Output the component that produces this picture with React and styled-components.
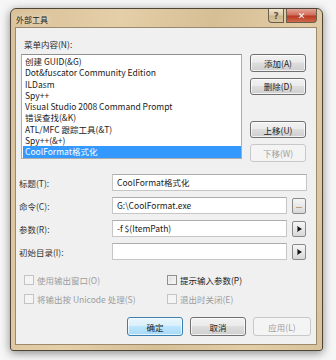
import React from 'react';
import styled, { createGlobalStyle } from 'styled-components';

const FS = '8.5px';

const Global = createGlobalStyle`
  html, body {
    margin: 0;
    padding: 0;
    background: #f6f6f6;
  }
  body {
    font-family: "Noto Sans CJK SC", "Noto Sans", sans-serif;
    font-size: ${FS};
    color: #2a2a2a;
  }
`;

const Page = styled.div`
  width: 336px;
  height: 360px;
  padding: 8px 0 0 10px;
  box-sizing: border-box;
`;

const Frame = styled.div`
  width: 313px;
  height: 343px;
  box-sizing: border-box;
  border: 1px solid #4d4638;
  border-radius: 6px 6px 3px 3px;
  background: linear-gradient(100deg, #d9c199 0%, #e5cfa8 30%, #d6be95 55%, #e3cda6 80%, #d8c29b 100%);
  box-shadow: 0 2px 10px rgba(0, 0, 0, 0.45);
  padding: 0 5px 5px 4px;
  display: flex;
  flex-direction: column;
`;

const TitleBar = styled.div`
  height: 18px;
  display: flex;
  align-items: flex-start;
  justify-content: space-between;
`;

const Title = styled.span`
  font-size: 8px;
  color: #1a1a1a;
  margin-top: 5px;
  margin-left: 1px;
  text-shadow: 0 0 6px rgba(255, 255, 255, 0.9);
`;

const Caption = styled.div`
  display: flex;
  gap: 2px;
`;

const CapButton = styled.div`
  width: ${({ wide }) => (wide ? 31 : 16)}px;
  height: 14px;
  box-sizing: border-box;
  border: 1px solid #6a5f4c;
  border-top: none;
  border-radius: ${({ wide }) => (wide ? '0 0 4px 0' : '0 0 0 4px')};
  background: ${({ wide }) =>
    wide
      ? 'linear-gradient(#e5a596 0%, #d0705d 45%, #b93a22 55%, #cf6a4c 100%)'
      : 'linear-gradient(#efe3cd 0%, #dcc9a8 45%, #cdb68e 55%, #d9c59f 100%)'};
  display: flex;
  align-items: center;
  justify-content: center;
  color: ${({ wide }) => (wide ? '#fff' : '#5b5346')};
  font-family: "DejaVu Sans", sans-serif;
  font-weight: bold;
  font-size: 9px;
`;

const Client = styled.div`
  flex: 1;
  background: #f0f0f0;
  border: 1px solid #9c8a6c;
  padding: 10px 8px 0 5px;
  display: flex;
  flex-direction: column;
`;

const GroupLabel = styled.div`
  line-height: 12px;
  margin-left: 3px;
  height: 16px;
`;

const TopRow = styled.div`
  display: flex;
  gap: 8px;
  height: 108px;
`;

const List = styled.div`
  width: 221px;
  height: 105px;
  box-sizing: border-box;
  border: 1px solid #adadad;
  border-top-color: #8f8f8f;
  background: #fff;
  padding: 1px 0 0 1px;
`;

const Item = styled.div`
  height: 11.3px;
  line-height: 11.3px;
  padding-left: 2px;
  white-space: nowrap;
  color: ${({ selected }) => (selected ? '#fff' : '#1a1a1a')};
  background: ${({ selected }) => (selected ? '#3399ff' : 'transparent')};
`;

const SideButtons = styled.div`
  display: flex;
  flex-direction: column;
  gap: 6px;
`;

const Spacer = styled.div`
  height: ${({ h }) => h}px;
`;

const Button = styled.div`
  width: ${({ w }) => w || 56}px;
  height: 19px;
  box-sizing: border-box;
  border: 1px solid ${({ disabled, primary }) => (disabled ? '#c8c8c8' : primary ? '#3c7fb1' : '#707070')};
  border-radius: 3px;
  background: ${({ disabled, primary }) =>
    disabled
      ? '#f4f4f4'
      : primary
      ? 'linear-gradient(#eaf6fd 0%, #d9f0fc 45%, #bee6fd 50%, #a7d9f5 100%)'
      : 'linear-gradient(#f2f2f2 0%, #ebebeb 45%, #dddddd 50%, #cfcfcf 100%)'};
  box-shadow: inset 0 0 0 1px ${({ disabled }) => (disabled ? 'transparent' : 'rgba(255,255,255,0.7)')};
  color: ${({ disabled }) => (disabled ? '#a0a0a0' : '#1a1a1a')};
  display: flex;
  align-items: center;
  justify-content: center;
`;

const Form = styled.div`
  margin-top: 12px;
  display: flex;
  flex-direction: column;
  gap: 6px;
  margin-left: -2px;
`;

const FormRow = styled.div`
  display: flex;
  align-items: center;
  height: 17px;
`;

const Label = styled.div`
  width: 93px;
  color: #333;
`;

const Input = styled.div`
  width: ${({ w }) => w}px;
  height: 17px;
  box-sizing: border-box;
  border: 1px solid #c6c6c6;
  border-top-color: #adadad;
  background: #fff;
  padding-left: 4px;
  line-height: 15px;
  white-space: nowrap;
  color: #1a1a1a;
`;

const SmallButton = styled.div`
  width: 14px;
  height: 16px;
  margin-left: 5px;
  box-sizing: border-box;
  border: 1px solid #8a8a8a;
  border-radius: 2px;
  background: linear-gradient(#f6f6f6 0%, #e8e8e8 50%, #d8d8d8 100%);
  display: flex;
  align-items: center;
  justify-content: center;
  font-size: 7px;
  line-height: 7px;
  color: #333;
`;

const Checks = styled.div`
  margin-top: 14px;
  margin-left: 3px;
  display: grid;
  grid-template-columns: 143px 1fr;
  row-gap: 8px;
`;

const Check = styled.div`
  display: flex;
  align-items: center;
  gap: 3px;
  height: 11px;
  color: ${({ disabled }) => (disabled ? '#9c9c9c' : '#1a1a1a')};
`;

const Box = styled.span`
  width: 8px;
  height: 8px;
  border: 1px solid ${({ disabled }) => (disabled ? '#c4c4c4' : '#8e8f8f')};
  background: ${({ disabled }) => (disabled ? '#f4f4f4' : 'linear-gradient(135deg, #dcdcdc, #fbfbfb)')};
  box-shadow: inset 0 0 0 1px ${({ disabled }) => (disabled ? '#f4f4f4' : '#f0f0f0')};
`;

const Footer = styled.div`
  margin-top: 13px;
  display: flex;
  justify-content: flex-end;
  gap: 7px;
  margin-right: -3px;
`;

const Arrow = () => (
  <svg width="5" height="6" viewBox="0 0 5 6">
    <path d="M0 0 L5 3 L0 6 Z" fill="#111" />
    <path d="M0 0 L1 0.6 L1 5.4 L0 6 Z" fill="#c0601a" />
  </svg>
);

const items = [
  '创建 GUID(&G)',
  'Dot&fuscator Community Edition',
  'ILDasm',
  'Spy++',
  'Visual Studio 2008 Command Prompt',
  '错误查找(&K)',
  'ATL/MFC 跟踪工具(&T)',
  'Spy++(&+)',
  'CoolFormat格式化',
];

export default function App() {
  return (
    <Page>
      <Global />
      <Frame>
        <TitleBar>
          <Title>外部工具</Title>
          <Caption>
            <CapButton>?</CapButton>
            <CapButton wide>✕</CapButton>
          </Caption>
        </TitleBar>
        <Client>
          <GroupLabel>菜单内容(N):</GroupLabel>
          <TopRow>
            <List>
              {items.map((t, i) => (
                <Item key={t} selected={i === items.length - 1}>{t}</Item>
              ))}
            </List>
            <SideButtons>
              <Button>添加(A)</Button>
              <Button>删除(D)</Button>
              <Spacer h={15} />
              <Button>上移(U)</Button>
              <Button disabled>下移(W)</Button>
            </SideButtons>
          </TopRow>
          <Form>
            <FormRow>
              <Label>标题(T):</Label>
              <Input w={195}>CoolFormat格式化</Input>
            </FormRow>
            <FormRow>
              <Label>命令(C):</Label>
              <Input w={175}>G:\CoolFormat.exe</Input>
              <SmallButton>...</SmallButton>
            </FormRow>
            <FormRow>
              <Label>参数(R):</Label>
              <Input w={175}>-f $(ItemPath)</Input>
              <SmallButton><Arrow /></SmallButton>
            </FormRow>
            <FormRow>
              <Label>初始目录(I):</Label>
              <Input w={175}></Input>
              <SmallButton><Arrow /></SmallButton>
            </FormRow>
          </Form>
          <Checks>
            <Check disabled><Box disabled />使用输出窗口(O)</Check>
            <Check><Box />提示输入参数(P)</Check>
            <Check disabled><Box disabled />将输出按 Unicode 处理(S)</Check>
            <Check disabled><Box disabled />退出时关闭(E)</Check>
          </Checks>
          <Footer>
            <Button primary>确定</Button>
            <Button>取消</Button>
            <Button w={58} disabled>应用(L)</Button>
          </Footer>
        </Client>
      </Frame>
    </Page>
  );
}
